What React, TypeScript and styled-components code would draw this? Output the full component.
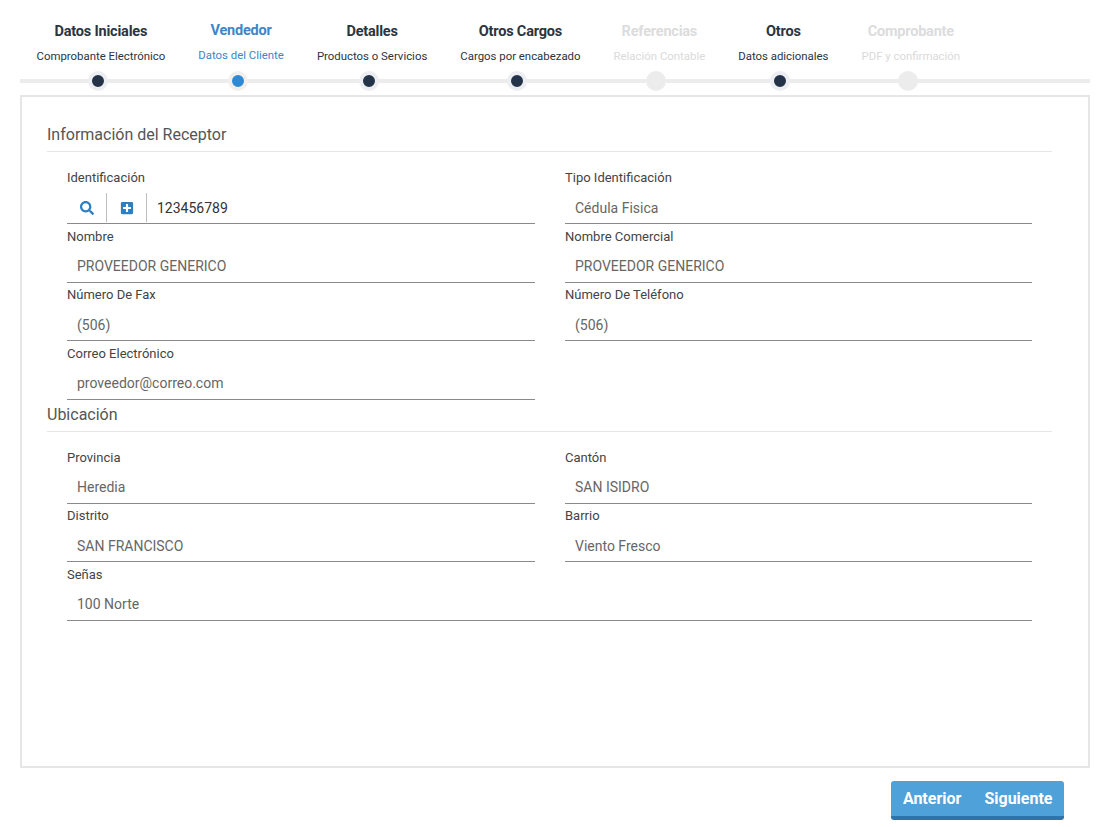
import styled, { createGlobalStyle } from "styled-components";
import { FaSearch, FaPlusSquare } from "react-icons/fa";

const GlobalStyle = createGlobalStyle`
    body {
        margin: 0;
        background: #ffffff;
        font-family: Roboto, "Liberation Sans", sans-serif;
    }
    * {
        box-sizing: border-box;
    }
`

const Page = styled.div`
    width: 1110px;
    height: 827px;
    overflow: hidden;
`

const Stepper = styled.div`
    margin: 0 20px;
    padding-top: 22px;
    display: flex;
    background: linear-gradient(#ececec, #ececec) no-repeat 0 79px / 100% 4px;
`

type StepState = "done" | "active" | "disabled";

const Step = styled.div`
    display: flex;
    flex-direction: column;
    align-items: center;
    padding: 0 16.5px;
`

const StepTitle = styled.div<{ state: StepState }>`
    font-size: 14.5px;
    font-weight: 700;
    line-height: 20px;
    letter-spacing: -0.2px;
    white-space: nowrap;
    color: ${p => p.state === "active" ? "#3b87c7" : p.state === "disabled" ? "#dcdcdc" : "#2b3441"};
    margin-top: ${p => p.state === "active" ? "-1px" : "0"};
`

const StepSub = styled.div<{ state: StepState }>`
    font-size: 11.4px;
    line-height: 14px;
    margin-top: 7px;
    white-space: nowrap;
    color: ${p => p.state === "active" ? "#3b87c7" : p.state === "disabled" ? "#dadada" : "#2b3441"};
`

const Dot = styled.div<{ state: StepState }>`
    width: 20px;
    height: 20px;
    margin: ${p => p.state === "active" ? "9px" : "8px"} 6px 0 0;
    border-radius: 50%;
    background: ${p => p.state === "disabled" ? "#ececec" : p.state === "active" ? "#2f8ad6" : "#253349"};
    border: ${p => p.state === "disabled" ? "none" : p.state === "active" ? "4px solid #f4efea" : "4px solid #eceef2"};
`

const Panel = styled.div`
    margin: 4px 20px 0;
    height: 673px;
    border: 2px solid #e6e6e6;
    padding: 28px 36px 0 25px;
`

const SectionTitle = styled.div<{ first?: boolean }>`
    font-size: 16px;
    line-height: 20px;
    color: #555555;
    padding-bottom: 6px;
    border-bottom: 1px solid #e6e6e6;
    margin-top: ${p => p.first ? "0" : "5px"};
`

const FieldGrid = styled.div`
    display: grid;
    grid-template-columns: 468px 467px;
    column-gap: 30px;
    row-gap: 4.5px;
    padding: 0 20px;
    margin-top: 18px;
`

const Field = styled.div<{ wide?: boolean }>`
    grid-column: ${p => p.wide ? "1 / -1" : "auto"};
    display: flex;
    flex-direction: column;
`

const Label = styled.div`
    font-size: 13px;
    line-height: 16px;
    font-weight: 400;
    color: #444444;
    margin-bottom: 7px;
`

const InputRow = styled.div`
    display: flex;
    height: 31px;
    border-bottom: 1px solid #8a8a8a;
`

const Addon = styled.div`
    width: 40px;
    display: flex;
    align-items: center;
    justify-content: center;
    color: #2f7fc0;
    font-size: 14px;
    border-right: 1px solid #bdbdbd;
    margin: 0 0 1px;
`

const Value = styled.div<{ dark?: boolean }>`
    flex: 1;
    display: flex;
    align-items: center;
    padding: 0 10px 1px;
    font-size: 14px;
    color: ${p => p.dark ? "#333333" : "#666666"};
    white-space: nowrap;
`

const Footer = styled.div`
    display: flex;
    justify-content: flex-end;
    padding: 13px 46px 0 0;
`

const ButtonGroup = styled.div`
    display: flex;
    background: #4fa1d9;
    border-bottom: 4px solid #2d74ad;
    border-radius: 3px;
`

const NavButton = styled.button`
    height: 35px;
    padding: 0 11.5px;
    border: none;
    background: transparent;
    color: #ffffff;
    font-family: Roboto, "Liberation Sans", sans-serif;
    font-size: 16px;
    font-weight: 700;
    cursor: pointer;
`

const steps: { title: string; sub: string; state: StepState }[] = [
    { title: "Datos Iniciales", sub: "Comprobante Electrónico", state: "done" },
    { title: "Vendedor", sub: "Datos del Cliente", state: "active" },
    { title: "Detalles", sub: "Productos o Servicios", state: "done" },
    { title: "Otros Cargos", sub: "Cargos por encabezado", state: "done" },
    { title: "Referencias", sub: "Relación Contable", state: "disabled" },
    { title: "Otros", sub: "Datos adicionales", state: "done" },
    { title: "Comprobante", sub: "PDF y confirmación", state: "disabled" },
];

const receptor = [
    { label: "Tipo Identificación", value: "Cédula Fisica" },
    { label: "Nombre", value: "PROVEEDOR GENERICO" },
    { label: "Nombre Comercial", value: "PROVEEDOR GENERICO" },
    { label: "Número De Fax", value: "(506)" },
    { label: "Número De Teléfono", value: "(506)" },
    { label: "Correo Electrónico", value: "proveedor@correo.com" },
];

const ubicacion = [
    { label: "Provincia", value: "Heredia" },
    { label: "Cantón", value: "SAN ISIDRO" },
    { label: "Distrito", value: "SAN FRANCISCO" },
    { label: "Barrio", value: "Viento Fresco" },
];

export default function App() {
    return (
        <Page>
            <GlobalStyle />
            <Stepper>
                {steps.map(step => (
                    <Step key={step.title}>
                        <StepTitle state={step.state}>{step.title}</StepTitle>
                        <StepSub state={step.state}>{step.sub}</StepSub>
                        <Dot state={step.state} />
                    </Step>
                ))}
            </Stepper>
            <Panel>
                <SectionTitle first>Información del Receptor</SectionTitle>
                <FieldGrid>
                    <Field>
                        <Label>Identificación</Label>
                        <InputRow>
                            <Addon><FaSearch /></Addon>
                            <Addon><FaPlusSquare /></Addon>
                            <Value dark>123456789</Value>
                        </InputRow>
                    </Field>
                    {receptor.map(f => (
                        <Field key={f.label}>
                            <Label>{f.label}</Label>
                            <InputRow><Value>{f.value}</Value></InputRow>
                        </Field>
                    ))}
                </FieldGrid>
                <SectionTitle>Ubicación</SectionTitle>
                <FieldGrid>
                    {ubicacion.map(f => (
                        <Field key={f.label}>
                            <Label>{f.label}</Label>
                            <InputRow><Value>{f.value}</Value></InputRow>
                        </Field>
                    ))}
                    <Field wide>
                        <Label>Señas</Label>
                        <InputRow><Value>100 Norte</Value></InputRow>
                    </Field>
                </FieldGrid>
            </Panel>
            <Footer>
                <ButtonGroup>
                    <NavButton>Anterior</NavButton>
                    <NavButton>Siguiente</NavButton>
                </ButtonGroup>
            </Footer>
        </Page>
    );
}
